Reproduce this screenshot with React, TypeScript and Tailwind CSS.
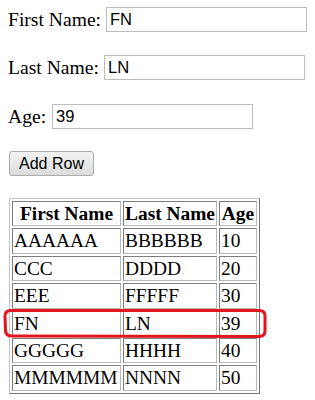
import React from 'react';

type Row = { first: string; last: string; age: string };

const rows: Row[] = [
  { first: 'AAAAAA', last: 'BBBBBB', age: '10' },
  { first: 'CCC', last: 'DDDD', age: '20' },
  { first: 'EEE', last: 'FFFFF', age: '30' },
  { first: 'FN', last: 'LN', age: '39' },
  { first: 'GGGGG', last: 'HHHH', age: '40' },
  { first: 'MMMMMM', last: 'NNNN', age: '50' },
];

const serif = "font-['Liberation_Serif','Times_New_Roman',serif]";
const sans = "font-['Liberation_Sans',Arial,sans-serif]";

const Field = ({ label, value, className, labelWidth }: { label: string; value: string; className: string; labelWidth: string }) => (
  <div className={`flex items-center gap-[5px] ${className}`}>
    <span className={`${serif} ${labelWidth} whitespace-nowrap text-[19.6px] text-black leading-[22px]`}>{label}</span>
    <input
      readOnly
      value={value}
      className={`${sans} h-[25px] w-[201px] border border-[#bdbdbd] bg-white pl-[3px] text-[16.5px] text-black outline-none`}
    />
  </div>
);

const cellBorder = 'border border-t-[#7d7d7d] border-l-[#7d7d7d] border-r-[#b8b8b8] border-b-[#b8b8b8]';

const App = () => {
  return (
    <div className="relative min-h-[400px] w-[315px] bg-white px-[8px] pt-[7px]">
      <Field label="First Name:" value="FN" labelWidth="w-[93px]" className="" />
      <Field label="Last Name:" value="LN" labelWidth="w-[91px]" className="mt-[23px]" />
      <Field label="Age:" value="39" labelWidth="w-[39px]" className="mt-[24px]" />

      {/* Add button */}
      <button
        className={`${sans} ml-[1px] mt-[22px] h-[25px] w-[85px] rounded-[3px] border border-[#acacac] bg-gradient-to-b from-[#f3f3f3] to-[#dcdcdc] text-[16px] text-black`}
      >
        Add Row
      </button>

      {/* Table */}
      <table
        className={`${serif} ml-[1px] mt-[22px] border-separate border-spacing-[2px] border border-t-[#c4c4c4] border-l-[#c4c4c4] border-r-[#767676] border-b-[#767676] text-[19.4px] text-black`}
      >
        <thead>
          <tr>
            <th className={`${cellBorder} w-[109px] px-[1px] py-[1px] text-center font-bold leading-[21.4px]`}>First Name</th>
            <th className={`${cellBorder} w-[94px] px-[1px] py-[1px] text-center font-bold leading-[21.4px]`}>Last Name</th>
            <th className={`${cellBorder} w-[38px] px-[1px] py-[1px] text-center font-bold leading-[21.4px]`}>Age</th>
          </tr>
        </thead>
        <tbody>
          {rows.map((r) => (
            <tr key={r.first}>
              <td className={`${cellBorder} px-[1px] py-[1px] text-left leading-[21.4px]`}>{r.first}</td>
              <td className={`${cellBorder} px-[1px] py-[1px] text-left leading-[21.4px]`}>{r.last}</td>
              <td className={`${cellBorder} px-[1px] py-[1px] text-left leading-[21.4px]`}>{r.age}</td>
            </tr>
          ))}
        </tbody>
      </table>

      {/* red annotation around the new row */}
      <svg className="pointer-events-none absolute left-0 top-0" width="315" height="400" viewBox="0 0 315 400">
        <path
          d="M10 310.5 Q5 311 5 316 L5.5 331 Q6 336 12 336 L259 336.5 Q265 336.5 265 331 L265 316 Q265 310.5 259 310.5 Z"
          fill="none"
          stroke="#e3151c"
          strokeWidth="3"
          strokeLinejoin="round"
        />
      </svg>
    </div>
  );
};

export default App;
